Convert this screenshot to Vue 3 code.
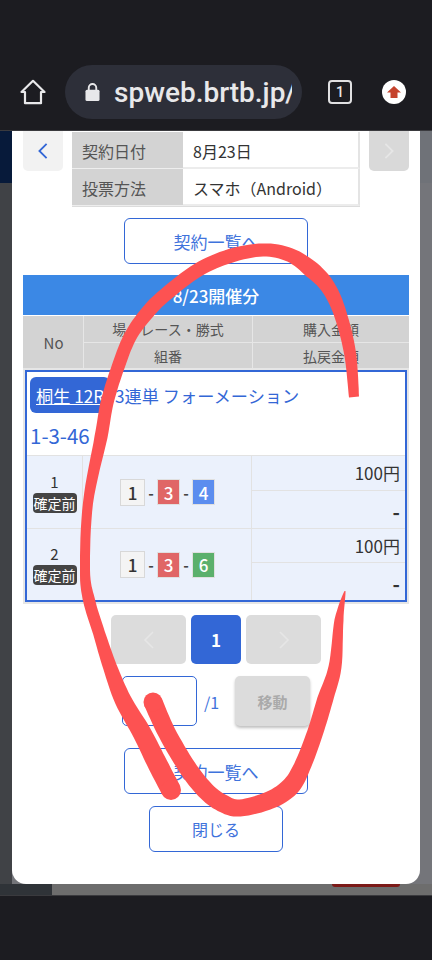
<script setup>
const rows = [
  { no: 1, last: 4, lastClass: 'blue', amount: '100円' },
  { no: 2, last: 6, lastClass: 'green', amount: '100円' },
]

// Hand-drawn marker strokes: [x, y, width] centre-line points.
const strokeA = [
  [354, 397, 10], [350, 353, 12], [340, 313, 13], [328, 287, 15], [312, 270, 17], [290, 255, 14],
  [263, 250, 13], [230, 256, 14], [198, 270, 14], [165, 295, 14], [147, 313, 14], [130, 337, 13],
  [117, 370, 13], [107, 403, 13], [101, 437, 13], [88, 503, 10], [85, 570, 10], [89, 600, 12],
  [99, 633, 12], [110, 667, 14], [123, 700, 17], [142, 733, 19], [158, 765, 20], [171, 790, 20],
]
const strokeB = [
  [153, 702, 19], [167, 733, 18], [187, 767, 18], [205, 790, 18], [222, 803, 18], [240, 808, 17],
  [270, 800, 18], [290, 787, 19], [302, 767, 17], [315, 733, 16], [325, 700, 16], [335, 667, 13],
  [339, 620, 9], [345, 591, 1],
]

function ribbon(pts) {
  const at = (i) => pts[Math.max(0, Math.min(pts.length - 1, i))]
  const samples = []
  for (let i = 0; i < pts.length - 1; i++) {
    const [p0, p1, p2, p3] = [at(i - 1), at(i), at(i + 1), at(i + 2)]
    for (let s = 0; s < 8; s++) {
      const t = s / 8
      const c = (k) =>
        0.5 * (2 * p1[k] + (p2[k] - p0[k]) * t + (2 * p0[k] - 5 * p1[k] + 4 * p2[k] - p3[k]) * t * t +
          (3 * p1[k] - p0[k] - 3 * p2[k] + p3[k]) * t * t * t)
      samples.push([c(0), c(1), p1[2] + (p2[2] - p1[2]) * t])
    }
  }
  samples.push(pts[pts.length - 1])
  const left = []
  const right = []
  samples.forEach((p, i) => {
    const a = samples[Math.max(0, i - 1)]
    const b = samples[Math.min(samples.length - 1, i + 1)]
    const dx = b[0] - a[0]
    const dy = b[1] - a[1]
    const len = Math.hypot(dx, dy) || 1
    const nx = (-dy / len) * (p[2] / 2)
    const ny = (dx / len) * (p[2] / 2)
    left.push(`${(p[0] + nx).toFixed(1)} ${(p[1] + ny).toFixed(1)}`)
    right.unshift(`${(p[0] - nx).toFixed(1)} ${(p[1] - ny).toFixed(1)}`)
  })
  return `M${left.join('L')}L${right.join('L')}Z`
}
const ribbonA = ribbon(strokeA)
const ribbonB = ribbon(strokeB)
</script>

<template>
  <div class="screen">
    <header class="topbar">
      <svg class="home" viewBox="0 0 26 26" width="26" height="26" fill="none" stroke="#e8e8ea" stroke-width="2.2" stroke-linejoin="round">
        <path d="M1.5 13 13 1.8 24.5 13H21V24.2H5V13Z" />
      </svg>
      <div class="address">
        <svg class="lock" viewBox="0 0 16 20" width="15" height="20">
          <path fill="none" stroke="#e8e8ea" stroke-width="2" d="M4 9V5.5a4 4 0 0 1 8 0V9" />
          <rect x="0.5" y="7.5" width="15" height="12" rx="1.6" fill="#e8e8ea" />
        </svg>
        <span class="url">spweb.brtb.jp/</span>
      </div>
      <div class="tabs">1</div>
      <div class="badge-up">
        <svg viewBox="0 0 14 12" width="14" height="12"><path fill="#c5432d" d="M7 0 14 6.5H10.5V12H3.5V6.5H0Z" /></svg>
      </div>
    </header>

    <main class="stage">
      <div class="bg-hero"></div>
      <div class="bg-rest"></div>
      <div class="bg-foot"><i class="bg-foot-left"></i><i class="bg-foot-red"></i></div>

      <section class="modal">
        <div class="info-row">
          <button class="arrow">
            <svg viewBox="0 0 12 20" width="12" height="18" fill="none" stroke="#3367d6" stroke-width="2"><path d="M10 2 2 10l8 8" /></svg>
          </button>
          <div class="info-table">
            <div class="info-label">契約日付</div><div class="info-value first">8月23日</div>
            <div class="info-label">投票方法</div><div class="info-value">スマホ（Android）</div>
          </div>
          <button class="arrow off">
            <svg viewBox="0 0 12 20" width="12" height="18" fill="none" stroke="#e6e6e6" stroke-width="2"><path d="M2 2l8 8-8 8" /></svg>
          </button>
        </div>

        <div class="btn list-btn first-list">契約一覧へ</div>

        <div class="result">
          <div class="result-title">8/23開催分</div>
          <div class="grid-head">
            <div class="h-no">No</div>
            <div class="h-c">場・レース・勝式</div>
            <div class="h-c">購入金額</div>
            <div class="h-c">組番</div>
            <div class="h-c">払戻金額</div>
          </div>
          <div class="entry">
            <div class="entry-top">
              <div class="entry-line">
                <a class="place">桐生 12R</a>
                <span class="kind">3連単 フォーメーション</span>
              </div>
              <div class="combo">1-3-46</div>
            </div>
            <div v-for="r in rows" :key="r.no" class="bet">
              <div class="bet-no">
                <span class="num">{{ r.no }}</span>
                <span class="state">確定前</span>
              </div>
              <div class="bet-combo">
                <span class="boat white">1</span><span class="dash">-</span>
                <span class="boat red">3</span><span class="dash">-</span>
                <span class="boat" :class="r.lastClass">{{ r.last }}</span>
              </div>
              <div class="bet-money">
                <div class="money">{{ r.amount }}</div>
                <div class="money dashv">-</div>
              </div>
            </div>
          </div>
        </div>

        <div class="pager">
          <div class="page-btn wide">
            <svg viewBox="0 0 12 20" width="14" height="20" fill="none" stroke="#e6e6e6" stroke-width="1.6"><path d="M10 2 2 10l8 8" /></svg>
          </div>
          <div class="page-btn current">1</div>
          <div class="page-btn wide">
            <svg viewBox="0 0 12 20" width="14" height="20" fill="none" stroke="#e6e6e6" stroke-width="1.6"><path d="M2 2l8 8-8 8" /></svg>
          </div>
        </div>

        <div class="jump">
          <div class="jump-input"></div>
          <span class="jump-total">/1</span>
          <div class="jump-btn">移動</div>
        </div>

        <div class="btn list-btn second-list">契約一覧へ</div>
        <div class="btn close-btn">閉じる</div>
      </section>
    </main>

    <footer class="bottombar"></footer>

    <svg class="scribble" viewBox="0 0 432 960" width="432" height="960" fill="#fd5252">
      <path :d="ribbonA" />
      <circle cx="171" cy="790" r="10" />
      <path :d="ribbonB" />
      <circle cx="153" cy="702" r="9.5" />
    </svg>
  </div>
</template>

<style>
html, body { margin: 0; background: #1c1c21; }
</style>

<style scoped>
.screen {
  position: relative;
  width: 432px;
  height: 960px;
  overflow: hidden;
  display: flex;
  flex-direction: column;
  background: #1c1c21;
  font-family: "Noto Sans CJK JP", "Noto Sans", sans-serif;
  color: #333;
}
.topbar {
  height: 131px;
  flex: none;
  box-sizing: border-box;
  padding: 65px 0 11px 20px;
  display: flex;
  align-items: center;
  border-bottom: 1px solid #3a3a3e;
}
.home { flex: none; }
.address {
  margin-left: 19px;
  width: 237px;
  height: 54px;
  flex: none;
  box-sizing: border-box;
  border-radius: 27px;
  background: #2d2f39;
  display: flex;
  align-items: center;
  padding-left: 20px;
  overflow: hidden;
}
.lock { flex: none; }
.url {
  margin-left: 14px;
  width: 178px;
  overflow: hidden;
  white-space: nowrap;
  font-family: Roboto, sans-serif;
  font-weight: 500;
  font-size: 28px;
  color: #e8e8ea;
}
.tabs {
  margin-left: 26px;
  width: 24px;
  height: 24px;
  flex: none;
  box-sizing: border-box;
  border: 2px solid #e0e0e2;
  border-radius: 4px;
  color: #e8e8ea;
  font-family: Roboto, sans-serif;
  font-weight: 500;
  font-size: 14px;
  display: flex;
  align-items: center;
  justify-content: center;
}
.badge-up {
  margin-left: 30px;
  width: 24px;
  height: 24px;
  flex: none;
  border-radius: 50%;
  background: #fff;
  display: flex;
  align-items: center;
  justify-content: center;
}

.stage {
  position: relative;
  height: 764px;
  flex: none;
  display: flex;
  flex-direction: column;
  background: #6f7175;
}
.bg-hero { height: 52px; flex: none; background: linear-gradient(90deg, #071a3a 0 12px, #6f7278 12px); }
.bg-rest { flex: 1; background: linear-gradient(90deg, #404246 0 12px, #74757a 12px); }
.bg-foot { height: 11px; flex: none; background: #6d6d6d; position: relative; display: flex; }
.bg-foot-left { display: block; width: 52px; background: #2f3338; }
.bg-foot-red {
  position: absolute;
  left: 332px;
  top: 0;
  width: 68px;
  height: 3px;
  background: #7c1a18;
  border-radius: 0 0 10px 10px;
}

.modal {
  position: absolute;
  left: 12px;
  top: 0;
  width: 408px;
  height: 753px;
  box-sizing: border-box;
  padding: 0 11px;
  background: #fff;
  border-radius: 0 0 14px 14px;
  display: flex;
  flex-direction: column;
  align-items: center;
}
.info-row {
  width: 386px;
  display: flex;
  justify-content: space-between;
  align-items: flex-start;
}
button.arrow {
  margin: 0;
  padding: 0;
  border: 0;
  width: 40px;
  height: 40px;
  border-radius: 0 0 5px 5px;
  background: #f2f2f2;
  display: flex;
  align-items: center;
  justify-content: center;
}
button.arrow.off { background: #d9d9d9; }
.info-table {
  width: 288px;
  margin-top: 1px;
  display: grid;
  grid-template-columns: 111px 177px;
  grid-auto-rows: 37px;
  border-bottom: 1px solid #dcdcdc;
  font-size: 16px;
}
.info-label {
  background: #d3d3d3;
  color: #555;
  padding: 2px 0 0 10px;
  display: flex;
  align-items: center;
  border-bottom: 1px solid #eee;
}
.info-value {
  padding: 2px 0 0 10px;
  display: flex;
  align-items: center;
  color: #333;
  border-right: 2px solid #e4e4e4;
  border-bottom: 2px solid #ececec;
  box-sizing: border-box;
}
.btn {
  box-sizing: border-box;
  border: 1px solid #3367d6;
  border-radius: 6px;
  color: #3f73dc;
  display: flex;
  align-items: center;
  justify-content: center;
  background: #fff;
}
.list-btn { width: 184px; height: 46px; font-size: 17px; flex: none; }
.first-list { margin-top: 11px; }
.result { width: 386px; margin-top: 11px; flex: none; }
.result-title {
  height: 40px;
  background: #3b88e5;
  color: #fff;
  font-size: 17px;
  font-weight: 500;
  display: flex;
  align-items: center;
  justify-content: center;
}
.grid-head {
  margin-top: 1px;
  display: grid;
  grid-template-columns: 60px 169px 157px;
  grid-template-rows: 26px 26px;
  gap: 1px 0;
  background: #d3d3d3;
  font-size: 14px;
  color: #555;
}
.h-no {
  grid-row: 1 / 3;
  display: flex;
  align-items: center;
  justify-content: center;
  padding-left: 1px;
  font-size: 15px;
}
.h-c {
  display: flex;
  align-items: center;
  justify-content: center;
  border-left: 1px solid #e6e6e6;
  box-shadow: 0 1px 0 #e6e6e6;
}
.entry {
  margin: 1px 2px 0;
  box-sizing: border-box;
  border: 2px solid #3367d6;
  box-shadow: 0 0 0 2px #e6e6e6;
  background: #fff;
  height: 232px;
  color: #3367d6;
}
.entry-top { height: 83px; box-sizing: border-box; padding: 5px 3px 0; }
.entry-line { display: flex; align-items: center; height: 36px; gap: 5px; font-size: 17.2px; white-space: nowrap; }
.place {
  box-sizing: border-box;
  width: 80px;
  height: 36px;
  padding-left: 6px;
  background: #3367d6;
  color: #fff;
  text-decoration: underline;
  border-radius: 6px;
  display: flex;
  align-items: center;
}
.combo { margin-top: 7px; font-size: 20.5px; line-height: 30px; }
.bet {
  display: grid;
  grid-template-columns: 56px 169px 1fr;
  height: 73px;
  background: #ebf1fc;
  color: #333;
  border-top: 1px solid #e2e2e2;
  box-sizing: border-box;
}
.bet + .bet { height: 72px; }
.bet-no {
  display: flex;
  flex-direction: column;
  align-items: center;
  justify-content: center;
  gap: 1px;
  font-size: 15px;
  border-right: 1px solid #e2e2e2;
}
.num { line-height: 20px; }
.state {
  width: 44px;
  height: 20px;
  line-height: 20px;
  font-size: 14px;
  text-align: center;
  border-radius: 4px;
  background: #444;
  color: #fff;
  white-space: nowrap;
}
.bet-combo {
  display: flex;
  align-items: center;
  justify-content: center;
  border-right: 1px solid #e2e2e2;
  padding-left: 1px;
  font-size: 17px;
  font-weight: 500;
}
.boat {
  width: 21px;
  height: 24px;
  display: flex;
  align-items: center;
  justify-content: center;
  color: #fff;
  border: 1px solid #e0e0e0;
  box-sizing: content-box;
}
.boat.white { background: #f4f4f4; color: #333; border: 1px solid #d8d8d8; height: 25px; width: 23px; }
.boat.red { background: #e06666; }
.boat.blue { background: #5b8def; }
.boat.green { background: #5bb06c; }
.dash { width: 12px; text-align: center; font-size: 15px; font-weight: 700; color: #444; }
.bet-money { display: flex; flex-direction: column; }
.money {
  flex: 1;
  display: flex;
  align-items: center;
  justify-content: flex-end;
  padding-right: 5px;
  font-size: 17px;
  color: #333;
}
.money:first-child { border-bottom: 1px solid #e2e2e2; }
.dashv { font-size: 20px; font-weight: 700; padding-top: 4px; }

.pager { margin-top: 13px; display: flex; flex: none; }
.page-btn {
  height: 49px;
  border-radius: 5px;
  display: flex;
  align-items: center;
  justify-content: center;
}
.page-btn.wide { width: 75px; background: #dcdcdc; }
.page-btn.current { width: 50px; margin: 0 5px 0 5px; background: #3367d6; color: #fff; font-size: 17px; font-weight: 700; }
.jump { margin-top: 12px; display: flex; align-items: flex-start; width: 188px; flex: none; }
.jump-input {
  width: 75px;
  height: 50px;
  box-sizing: border-box;
  border: 1px solid #3367d6;
  border-radius: 5px;
  background: #fff;
  flex: none;
}
.jump-total { margin: 14px 16px 0 7px; width: 15px; font-size: 16px; line-height: 24px; color: #3f73dc; flex: none; }
.jump-btn {
  width: 75px;
  height: 50px;
  flex: none;
  border-radius: 5px;
  background: #dcdcdc;
  color: #aaa;
  font-size: 15px;
  font-weight: 700;
  display: flex;
  align-items: center;
  justify-content: center;
  box-shadow: 0 2px 3px rgba(0,0,0,.25);
}
.second-list { margin-top: 22px; }
.close-btn { margin-top: 12px; width: 134px; height: 46px; font-size: 16px; flex: none; }
.bottombar { flex: 1; border-top: 1px solid #3a3a3e; background: #1c1c21; }

.scribble { position: absolute; left: 0; top: 0; pointer-events: none; }
</style>
